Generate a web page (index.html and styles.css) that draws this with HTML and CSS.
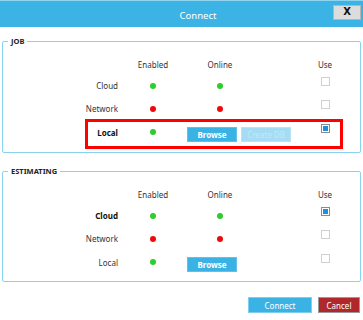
FILE: index.html
```html
<!DOCTYPE html>
<html lang="en">

<head>
  <meta charset="UTF-8" />
  <title>Connect</title>
  <link rel="stylesheet" href="styles.css">
</head>

<body>
  <!-- Title bar -->
  <div class="titlebar">
    <span class="title">Connect</span>
    <button class="btnClose">X</button>
  </div>

  <!-- JOB group -->
  <div class="group groupJob">
    <span class="legend">JOB</span>
    <div class="grid">
      <span></span>
      <span class="head">Enabled</span>
      <span class="head">Online</span>
      <span></span>
      <span class="head">Use</span>
    </div>
    <div class="grid">
      <span class="label">Cloud</span>
      <span class="cell"><i class="dot green"></i></span>
      <span class="cell"><i class="dot green"></i></span>
      <span></span>
      <span class="cell"><i class="check"></i></span>
    </div>
    <div class="grid">
      <span class="label">Network</span>
      <span class="cell"><i class="dot red"></i></span>
      <span class="cell"><i class="dot red"></i></span>
      <span></span>
      <span class="cell"><i class="check"></i></span>
    </div>
    <div class="grid rowLast highlight">
      <span class="label bold">Local</span>
      <span class="cell"><i class="dot green"></i></span>
      <span class="actions">
        <button class="btnBlue">Browse</button>
        <button class="btnBlue disabled">Create DB</button>
      </span>
      <span class="cell"><i class="check on"></i></span>
    </div>
  </div>

  <!-- ESTIMATING group -->
  <div class="group groupEst">
    <span class="legend">ESTIMATING</span>
    <div class="grid">
      <span></span>
      <span class="head">Enabled</span>
      <span class="head">Online</span>
      <span></span>
      <span class="head">Use</span>
    </div>
    <div class="grid">
      <span class="label bold">Cloud</span>
      <span class="cell"><i class="dot green"></i></span>
      <span class="cell"><i class="dot green"></i></span>
      <span></span>
      <span class="cell"><i class="check on"></i></span>
    </div>
    <div class="grid">
      <span class="label">Network</span>
      <span class="cell"><i class="dot red"></i></span>
      <span class="cell"><i class="dot red"></i></span>
      <span></span>
      <span class="cell"><i class="check"></i></span>
    </div>
    <div class="grid rowLast">
      <span class="label">Local</span>
      <span class="cell"><i class="dot green"></i></span>
      <span class="actions">
        <button class="btnBlue">Browse</button>
      </span>
      <span class="cell"><i class="check"></i></span>
    </div>
  </div>

  <!-- Footer -->
  <div class="footer">
    <button class="btnConnect">Connect</button>
    <button class="btnCancel">Cancel</button>
  </div>
</body>

</html>
```

FILE: styles.css
```css
body {
  margin: 0;
  font-family: "Noto Sans", "Open Sans", sans-serif;
  font-size: 8px;
  color: #333;
  background-color: white;
}

.titlebar {
  height: 27px;
  display: flex;
  align-items: center;
  background-color: #3bb4e5;
  border-top: 1px solid #8fd3ef;
  box-sizing: border-box;
}

.title {
  flex: 1;
  text-align: center;
  padding-left: 63px;
  color: white;
  font-size: 9.5px;
  padding-top: 2px;
}

.btnClose {
  width: 28px;
  height: 15px;
  margin-right: 2px;
  margin-bottom: 4px;
  padding: 0;
  border: 1px solid #b5b5b5;
  background-color: #dcdcdc;
  font-family: "DejaVu Sans", sans-serif;
  font-weight: bold;
  font-size: 10px;
  line-height: 12px;
  color: #111;
}

.group {
  position: relative;
  margin: 0 2px;
  border: 1px solid #8ad2f0;
  border-radius: 2px;
  padding: 12px 0 8px 0;
}

.groupJob {
  margin-top: 14px;
}

.groupEst {
  margin-top: 18px;
  padding-bottom: 7px;
}

.legend {
  position: absolute;
  top: -6px;
  left: 5px;
  padding: 0 3px;
  background-color: white;
  font-weight: bold;
  font-size: 7.5px;
  line-height: 11px;
  color: #222;
}

.grid {
  display: grid;
  grid-template-columns: 115px 70px 64px 58px 30px;
  height: 23px;
  align-items: center;
  position: relative;
}

.legend + .grid {
  height: 20px;
}

.rowLast {
  height: 24px;
}

.highlight::before {
  content: "";
  position: absolute;
  left: 82px;
  width: 252px;
  top: -1px;
  bottom: -5px;
  border: 3px solid #ff0000;
}

.head {
  text-align: center;
}

.label {
  text-align: right;
}

.bold {
  font-weight: bold;
  color: #111;
}

.cell {
  display: flex;
  justify-content: center;
}

.dot {
  width: 6px;
  height: 6px;
  border-radius: 50%;
}

.green {
  background-color: #2ecc2e;
}

.red {
  background-color: #ee0a0a;
}

.check {
  width: 9px;
  height: 9px;
  box-sizing: border-box;
  border: 1px solid #d0d0d0;
  margin-bottom: 8px;
  background-color: white;
}

.check.on {
  border-color: #8c8c8c;
  padding: 1px;
}

.check.on::before {
  content: "";
  display: block;
  width: 5px;
  height: 5px;
  background-color: #1f8ede;
}

.actions {
  grid-column: 3 / span 2;
  display: flex;
  gap: 4px;
  margin-left: -1px;
  margin-top: 4px;
}

.btnBlue {
  width: 50px;
  height: 15px;
  padding: 0;
  border: 1px solid #5fc2ea;
  background-color: #3ab3e4;
  color: white;
  font-family: inherit;
  font-size: 8px;
  font-weight: bold;
}

.btnBlue.disabled {
  background-color: #a5dcf3;
  border-color: #b8e4f6;
  color: #c4e8f8;
  font-weight: normal;
}

.footer {
  display: flex;
  justify-content: flex-end;
  gap: 6px;
  margin-top: 15px;
  padding-right: 3px;
}

.btnConnect,
.btnCancel {
  height: 16px;
  padding: 0;
  font-family: inherit;
  font-size: 8px;
  color: white;
}

.btnConnect {
  width: 64px;
  background-color: #3ab3e4;
  border: 1px solid #7fcdef;
}

.btnCancel {
  width: 42px;
  background-color: #b1282c;
  border: 1px solid #9a9a9a;
}
```
